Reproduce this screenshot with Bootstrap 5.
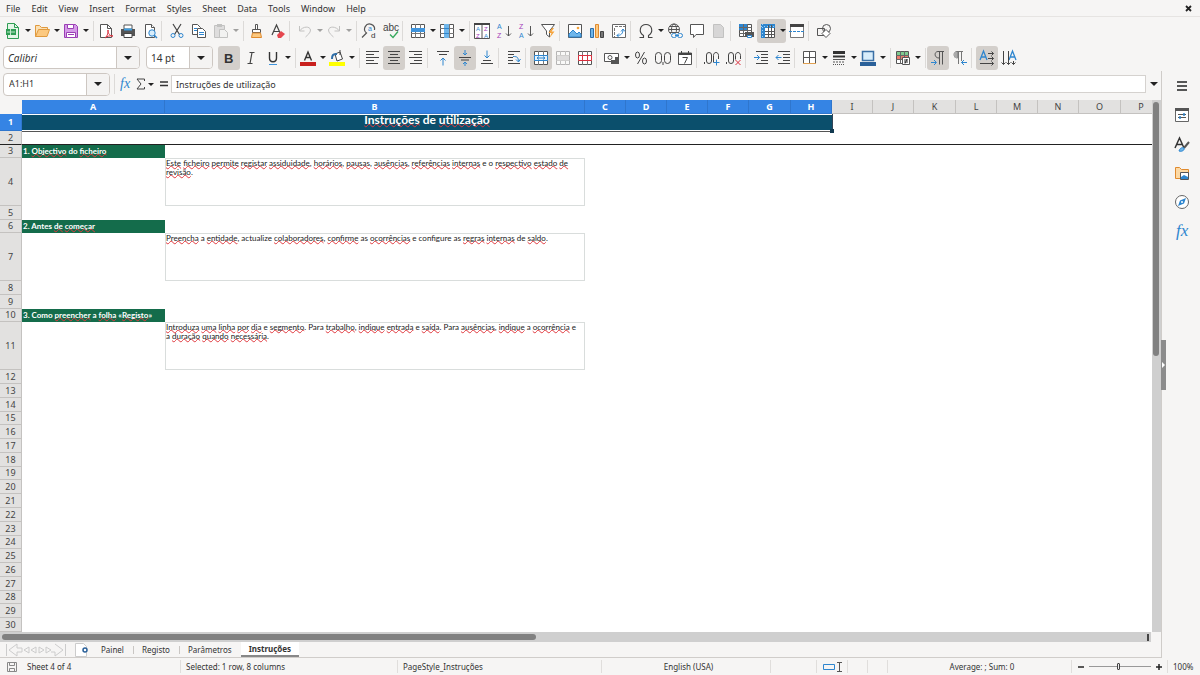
<!DOCTYPE html>
<html lang="en">
<head>
<meta charset="utf-8">
<meta name="viewport" content="width=device-width, initial-scale=1">
<title>Instruções – Calc</title>
<link href="https://cdn.jsdelivr.net/npm/bootstrap@5.3.0/dist/css/bootstrap.min.css" rel="stylesheet">
<style>
:root{--chrome:#f6f5f4;--line:#dcdad8;--ink:#333;--blue:#3584e4}
body{font:9px/12px "Noto Sans","Open Sans",sans-serif;color:var(--ink);background:var(--chrome)}
button,input{font:inherit;color:inherit;padding:0;border:0;background:none}
svg{display:block;flex:none;overflow:visible}
svg text{font-family:"Liberation Sans",sans-serif}
svg text.fx{font-family:"Liberation Serif",serif;font-style:italic}
.ic{width:16px;height:16px}
.menus{height:17px;border-bottom:1px solid #e6e4e2;padding:1px 8px 0 6px;gap:11px}
.menus a{color:var(--ink);text-decoration:none}
.tools{height:27px;padding-left:2px}
.tools.fmt{padding-left:3px}
.tb{width:22px;height:24px;border-radius:3px;display:flex;align-items:center;justify-content:center;flex:none}
.tb.dd{width:29px;justify-content:flex-start;padding-left:3px}
.tb.dd::after,.caret::after{content:"";border:3px solid transparent;border-top:3px solid #222;border-bottom:0;margin-left:4px}
.caret::after{border-width:4px 4px 0;margin:0}
.tb.on{background:#d3cfcb}
.tb:disabled{opacity:.4}
.bar{width:5px;height:20px;border-left:1px solid var(--line);flex:none}
.dd + .bar{width:6px;border-left:0;background:linear-gradient(var(--line),var(--line)) 4px 0/1px 100% no-repeat}
.combo{height:23px;border:1px solid #cdc7c2;border-radius:4px;background:#fff;overflow:hidden;flex:none}
.combo input{min-width:0;flex:1;padding-left:5px}
.combo button{width:23px;border-left:1px solid #cdc7c2;background:#f4f3f2}
.combo.face{width:137px}.combo.size{width:67px;margin:0 5px 0 6px}.combo.cellref{width:107px}
.combo.face input,.combo.size input{font-size:10px;padding-left:4px}
.fbar{height:29px;padding:0 0 3px 3px}
.fbar .formula{height:18px;border:1px solid #d5d2cf;background:#fff;padding-left:4px}
.fbar button.tb{width:14px}.fbar button.tb.dd{width:24px;padding:0 0 0 2px}
.fbar .tb.dd::after{margin-left:1px}
.sheetbox{background:#fff;min-height:0}
.grid{table-layout:fixed;width:1162px;border-collapse:separate;border-spacing:0;line-height:12px}
.grid th,.grid td{padding:0;white-space:nowrap}
.grid th{font-weight:400;text-align:center;background:#e2e1e0;border-right:1px solid #c4c2c0;border-bottom:1px solid #c4c2c0;color:#444;overflow:hidden}
.grid tr{height:14px}.grid tr.s{height:13px}.grid tr.tall{height:48px}.grid tr.title{height:17px}
.grid thead th.sel,.grid tbody th.sel{background:var(--blue);border-color:#2f76cd;color:#fff;font-weight:700}
.grid thead th:first-child{background:var(--chrome);border:0}
.grid td{font-family:Lato,sans-serif;vertical-align:top;color:#222}
.grid td.head{background:#0b4f6c;color:#fff;font-weight:700;font-size:12px;line-height:12px;text-align:center;vertical-align:top;border-bottom:1px solid #fff;box-shadow:0 1px #555,1px 0 #345,inset 0 1px #fff;position:relative}
.grid td.head::after{content:"";position:absolute;right:-2px;bottom:-3px;width:4px;height:4px;background:#123a50}
.grid td.sec{background:#146c4b;color:#fff;font-weight:700;font-size:8px;vertical-align:middle;line-height:11px;padding-left:1px}
.grid td.note{border:1px solid #d9dddc;line-height:9px;font-size:8px}
.grid tr.freeze>*{border-bottom:1px solid #222}
.grid u{text-decoration:underline wavy #e0393e 1px;text-underline-offset:-1px;text-decoration-skip-ink:none}
.vs{width:9px;background:#cfcfcf;padding:2px 2px 0 1px}.vs div{height:48%;border-radius:3px;background:#808080}
.hs{height:10px;background:#cfcfcf;padding:0 2px;margin-right:10px}.hs div{height:6px;border-radius:3px;background:#808080}
.hs i{width:2px;height:7px;background:#444}
.side{width:39px;border-left:1px solid #cfccc9;position:relative}
.side button{height:29px;padding-left:1px}
.grip{position:absolute;left:-1px;top:calc(50% - 25px);width:5px;height:50px;background:#8c8c8c}
.grip::after{content:"";border:3px solid transparent;border-left:3px solid #fff;border-right:0;margin-left:1px}
.tabs{height:16px;border-bottom:1px solid #d0cdca;padding-left:5px;font-size:8px}
.tabs .tabbtn{height:100%;padding:0 9px 0 8px;line-height:15px}
.tabs .tabbtn + .tabbtn{background:linear-gradient(#c9c6c3,#c9c6c3) 0 4px/1px 8px no-repeat;padding-left:9px}
.tabs .tabbtn.now{background:#fff;font-weight:700;border-bottom:2px solid #888;line-height:13px;padding:0 8px}
.stat{height:17px;font-size:8px}
.stat>div{border-left:1px solid #e0dedc;height:13px;padding-left:5px;flex-basis:0;min-width:0;white-space:nowrap;display:flex;align-items:center}
.stat>div.plain{border-color:transparent}
.stat input[type=range]{-webkit-appearance:none;appearance:none;height:12px;min-width:0;flex:1;background:linear-gradient(#999,#999) 0 50%/100% 1px no-repeat}
.stat input[type=range]::-webkit-slider-thumb{-webkit-appearance:none;width:3px;height:7px;border:1px solid #444;background:#eee;border-radius:1px}
</style>
</head>
<body class="vh-100 d-flex flex-column overflow-hidden">
<svg width="0" height="0" class="position-absolute" fill="none" stroke="#555">
<defs>
<g id="page" fill="#fff" stroke="#555"><path d="M3.500 1.500h6l3 3v10h-9z"/><path d="M9.500 1.500v3h3"/></g>
<g id="grd" fill="none"><path fill="#fff" stroke="#555" d="M1.500 1.500h13v13h-13z"/><path stroke="#777" d="M1 5.500h14M1 10.500h14M5.500 1v14M10.500 1v14"/></g>
<g id="arr" fill="none" stroke="#555"><path d="M12.500 3v10M10 10.500l2.500 2.500 2.500-2.500"/></g>
</defs>
</svg>

<nav class="menus d-flex align-items-center" aria-label="Menu">
<a href="#">File</a><a href="#">Edit</a><a href="#">View</a><a href="#">Insert</a><a href="#">Format</a><a href="#">Styles</a><a href="#">Sheet</a><a href="#">Data</a><a href="#">Tools</a><a href="#">Window</a><a href="#">Help</a>
<button class="ms-auto" aria-label="Close"><svg width="7" height="7" viewBox="0 0 7 7"><path d="M1 1l5 5M6 1L1 6" stroke="#222" stroke-width="1.800"/></svg></button>
</nav>

<div class="tools d-flex align-items-center" role="toolbar" aria-label="Standard">
<button class="tb dd" aria-label="New"><svg class="ic" viewBox="0 0 16 16" fill="none"><path d="M2.500 .5h7l4 4v11h-11z" fill="#e4f6e8" stroke="#2f9e54"/><path d="M9.500 .5v4h4" stroke="#2f9e54"/><path d="M1 6h10v6H1z" fill="#2f9e54"/><path d="M2 9h8M5.500 6v6" stroke="#bfe8cb"/></svg></button>
<button class="tb dd" aria-label="Open"><svg class="ic" viewBox="0 0 16 16"><path d="M1.500 13.500v-11h4l2 2h6v3" fill="#fbe0b3" stroke="#e09a3e"/><path d="M1.500 13.500l3-7h11l-2.500 7z" fill="#fcc980" stroke="#e09a3e"/></svg></button>
<button class="tb dd" aria-label="Save"><svg class="ic" viewBox="0 0 16 16"><path d="M1.500 1.500h11l2 2v11h-13z" fill="#d59be8" stroke="#9a3fb5"/><path d="M4.500 1.500h6v4h-6z" fill="#fff" stroke="#9a3fb5"/><path d="M3.500 9.500h9v5h-9z" fill="#fff" stroke="#9a3fb5"/><path d="M5 11.500h6" stroke="#9a3fb5"/></svg></button>
<span class="bar"></span>
<button class="tb" aria-label="Export as PDF"><svg class="ic" viewBox="0 0 16 16" fill="none"><path d="M2.500 1.500h7l4 4v9h-11z" fill="#fff" stroke="#555"/><path d="M9.500 1.500v4h4" stroke="#555"/><path d="M7 15c3-3 3-5 3-8 0 4 2 6 5 6-3-.5-6 0-8 2z" fill="#fff" stroke="#d9303e"/></svg></button>
<button class="tb" aria-label="Print"><svg class="ic" viewBox="0 0 16 16"><path d="M4 2h8v4H4z" fill="#fff" stroke="#555"/><path d="M1 6h14v7H1z" fill="#555"/><path d="M4 5.500h8v2H4z" fill="#3f9fe0"/><path d="M4 10.500h8v4H4z" fill="#fff" stroke="#444"/></svg></button>
<button class="tb" aria-label="Print Preview"><svg class="ic" viewBox="0 0 16 16"><use href="#page"/><circle cx="10" cy="10" r="3.200" fill="#d8edfb" stroke="#2e86cf"/><path d="M12.300 12.300l2.700 2.700" stroke="#2e86cf" stroke-width="1.500"/></svg></button>
<span class="bar"></span>
<button class="tb" aria-label="Cut"><svg class="ic" viewBox="0 0 16 16" fill="none"><path d="M4 1l6.500 10.500M12 1L5.500 11.500" stroke="#444" stroke-width="1.200"/><circle cx="4" cy="12.500" r="2" stroke="#2e86cf"/><circle cx="12" cy="12.500" r="2" stroke="#2e86cf"/></svg></button>
<button class="tb" aria-label="Copy"><svg class="ic" viewBox="0 0 16 16"><path d="M1.500 1.500h5l3 3v7h-8z" fill="#fff" stroke="#555"/><path d="M3 5.500h3M3 7.500h3" stroke="#2e86cf"/><path d="M6.500 5.500h5l3 3v6h-8z" fill="#fff" stroke="#555"/><path d="M8 9.500h5M8 11.500h5" stroke="#2e86cf"/></svg></button>
<button class="tb dd" disabled aria-label="Paste"><svg class="ic" viewBox="0 0 16 16"><path d="M1.500 2.500h10v12h-10z" fill="#bbb" stroke="#777"/><path d="M4 1h5v3H4z" fill="#777"/><path d="M6.500 6.500h5l3 3v5h-8z" fill="#eee" stroke="#777"/></svg></button>
<span class="bar"></span>
<button class="tb" aria-label="Clone Formatting"><svg class="ic" viewBox="0 0 16 16"><path d="M7.500 1.500h2v5h-2z" fill="#fff" stroke="#555"/><path d="M4.500 6.500h8v3h-8z" fill="#fff" stroke="#555"/><path d="M4.500 10h8l1 4.500h-10z" fill="#fcc980" stroke="#e08a2e"/></svg></button>
<button class="tb" aria-label="Clear Formatting"><svg class="ic" viewBox="0 0 16 16"><path d="M2 12L6.500 2 11 12M3.500 8.500h6" fill="none" stroke="#444" stroke-width="1.200"/><path d="M7 12l4-4 4 3-4 4H8z" fill="#e5474f"/></svg></button>
<span class="bar"></span>
<button class="tb dd" disabled aria-label="Undo"><svg class="ic" viewBox="0 0 16 16" fill="none"><path d="M2.500 3v5h5M2.500 8C6 3 13 3 13.500 7c0 3-3 5-5 7" stroke="#777"/></svg></button>
<button class="tb dd" disabled aria-label="Redo"><svg class="ic" viewBox="0 0 16 16" fill="none"><path d="M13.500 3v5h-5M13.500 8C10 3 3 3 2.500 7c0 3 3 5 5 7" stroke="#777"/></svg></button>
<span class="bar"></span>
<button class="tb" aria-label="Find and Replace"><svg class="ic" viewBox="0 0 16 16" fill="none"><path d="M13.500 7A5 5 0 1 0 5.500 10L1 14.500" stroke="#555" stroke-width="1.200"/><text x="7" y="8" font-size="7" fill="#2e86cf">a</text><text x="10" y="15" font-size="8" fill="#333">d</text></svg></button>
<button class="tb" aria-label="Spelling"><svg class="ic" viewBox="0 0 16 16" fill="none"><text x="0" y="8" font-size="10" fill="#444">abc</text><path d="M7 11.500l3 3 5-6" stroke="#35a85c" stroke-width="1.300"/></svg></button>
<span class="bar"></span>
<button class="tb dd" aria-label="Row"><svg class="ic" viewBox="0 0 16 16"><use href="#grd"/><path d="M1 5h14v4H1z" fill="#3f94dc"/></svg></button>
<button class="tb dd" aria-label="Column"><svg class="ic" viewBox="0 0 16 16"><use href="#grd"/><path d="M5 1h5v14H5z" fill="#6fb6ea"/><path d="M5 5.500h5M5 10.500h5" stroke="#2e86cf"/></svg></button>
<span class="bar"></span>
<button class="tb" aria-label="Sort"><svg class="ic" viewBox="0 0 16 16"><path d="M.5 .5h15v15H.5zM8 .5v15" fill="#fff" stroke="#555"/><path d="M0 1h16" stroke="#444" stroke-width="2"/><g font-size="6"><text x="2" y="8" fill="#2e86cf">A</text><text x="2" y="15" fill="#a43bb8">Z</text><text x="10" y="8" fill="#a43bb8">Z</text><text x="10" y="15" fill="#2e86cf">A</text></g></svg></button>
<button class="tb" aria-label="Sort Ascending"><svg class="ic" viewBox="0 0 16 16"><g font-size="7"><text x="1" y="6" fill="#2e86cf">A</text><text x="1" y="15" fill="#a43bb8">Z</text></g><use href="#arr"/></svg></button>
<button class="tb" aria-label="Sort Descending"><svg class="ic" viewBox="0 0 16 16"><g font-size="7"><text x="1" y="6" fill="#a43bb8">Z</text><text x="1" y="15" fill="#2e86cf">A</text></g><use href="#arr"/></svg></button>
<button class="tb" aria-label="AutoFilter"><svg class="ic" viewBox="0 0 16 16"><path d="M1.500 1.500h13L9.500 8v6l-3-2.500V8z" fill="#fff" stroke="#555"/><path d="M12 5L8.500 10h3L9.500 15l5-6.500h-3L14 5z" fill="#f5a33b"/></svg></button>
<span class="bar"></span>
<button class="tb" aria-label="Image"><svg class="ic" viewBox="0 0 16 16"><path d="M1.500 1.500h13v13h-13z" fill="#fff" stroke="#555"/><path d="M2 14v-3l4-4 4 4 2-2 2 2v3z" fill="#6fb6ea" stroke="#2e86cf"/><circle cx="11" cy="5" r="1.300" fill="#f5a33b"/></svg></button>
<button class="tb" aria-label="Chart"><svg class="ic" viewBox="0 0 16 16"><path d="M1.500 5.500h3v9h-3z" fill="#6fb6ea" stroke="#2e6ea8"/><path d="M6.500 1.500h3v13h-3z" fill="#fcc980" stroke="#e08a2e"/><path d="M11.500 8.500h3v6h-3z" fill="#777" stroke="#444"/></svg></button>
<button class="tb" aria-label="Pivot Table"><svg class="ic" viewBox="0 0 16 16" fill="none"><path d="M1.500 1.500h13v13h-13z" fill="#fff" stroke="#666"/><path d="M4 3.500h10M3.500 5v9" stroke="#777" stroke-dasharray="3 1"/><path d="M6 12.500c4 0 6-2 6-6M10 8.500l2-2.500 2 2.500M8 10.500l-2 2 2 2" stroke="#2e86cf"/></svg></button>
<span class="bar"></span>
<button class="tb dd" aria-label="Special Character"><svg class="ic" viewBox="0 0 16 16" fill="none"><path d="M1.500 14.500h4v-2C0 9 2 1.500 8 1.500S16 9 10.500 12.500v2h4" stroke="#444" stroke-width="1.100"/></svg></button>
<button class="tb" aria-label="Hyperlink"><svg class="ic" viewBox="0 0 16 16" fill="none"><circle cx="7" cy="6.500" r="5.500" stroke="#555"/><ellipse cx="7" cy="6.500" rx="2.500" ry="5.500" stroke="#555"/><path d="M1.500 6.500h11M2.500 3.500h9M2.500 9.500h9" stroke="#555"/><path d="M4 10h12v6H4z" fill="#f6f5f4"/><rect x="4.500" y="10.500" width="5" height="4" rx="2" stroke="#2e86cf"/><rect x="10.500" y="10.500" width="5" height="4" rx="2" stroke="#2e86cf"/><path d="M8 12.500h4" stroke="#2e86cf"/></svg></button>
<button class="tb" aria-label="Comment"><svg class="ic" viewBox="0 0 16 16"><path d="M1.500 1.500h13v10H7l-2.500 3v-3h-3z" fill="#fff" stroke="#555"/></svg></button>
<button class="tb" disabled aria-label="Headers and Footers"><svg class="ic" viewBox="0 0 16 16"><path d="M2.500 1.500h7l3 3v10h-10z" fill="#aaa" stroke="#777"/></svg></button>
<span class="bar"></span>
<button class="tb" aria-label="Define Print Area"><svg class="ic" viewBox="0 0 16 16"><path fill="#fff" stroke="#555" d="M1.500 1.500h12v12h-12z"/><path d="M1 1h9v6H1z" fill="#2e86cf"/><path stroke="#666" d="M1 4.500h13M1 7.500h13M1 10.500h13M5.500 1v13M9.500 1v13"/><path d="M7 9h9v5H7z" fill="#555"/><path d="M9.500 12.500h4v2h-4z" fill="#fff" stroke="#2e86cf"/></svg></button>
<button class="tb dd on" aria-label="Freeze Rows and Columns"><svg class="ic" viewBox="0 0 16 16"><path fill="#fff" stroke="#555" d="M2.500 2.500h12v12h-12z"/><path d="M1 1h14v4H5v10H1z" fill="#2e86cf"/><path stroke="#555" d="M5 8.500h10M5 11.500h10M8.500 2v13M11.500 2v13"/><path stroke="#9cd0f5" d="M2.500 1v14M1 3.500h14" stroke-dasharray="1 2"/></svg></button>
<button class="tb" aria-label="Split Window"><svg class="ic" viewBox="0 0 16 16" fill="none"><path d="M1.500 1.500h13v13h-13z" fill="#fff" stroke="#777"/><path d="M1 2.500h14" stroke="#444" stroke-width="3"/><path d="M0 8.500h16" stroke="#2e86cf" stroke-dasharray="3 1"/></svg></button>
<span class="bar"></span>
<button class="tb" aria-label="Show Draw Functions"><svg class="ic" viewBox="0 0 16 16" fill="none" stroke="#555"><path d="M1.500 5.500h7v7h-7z"/><circle cx="10.500" cy="5.500" r="4"/><path d="M10 6.500l4 4-4 4-4-4z" fill="#fff"/></svg></button>
</div>

<div class="tools fmt d-flex align-items-center" role="toolbar" aria-label="Formatting">
<div class="combo face d-flex"><input class="fst-italic" aria-label="Font name" value="Calibri"><button class="caret d-flex align-items-center justify-content-center" aria-label="Font list"></button></div>
<div class="combo size d-flex"><input aria-label="Font size" value="14 pt"><button class="caret d-flex align-items-center justify-content-center" aria-label="Size list"></button></div>
<button class="tb on" aria-label="Bold"><svg class="ic" viewBox="0 0 16 16"><text x="3" y="13" font-size="13" font-weight="700" fill="#333">B</text></svg></button>
<button class="tb" aria-label="Italic"><svg class="ic" viewBox="0 0 16 16" fill="none"><path d="M6.500 2.500h5M4.500 13.500h5M9 2.500L7 13.500" stroke="#444" stroke-width="1.200"/></svg></button>
<button class="tb dd" aria-label="Underline"><svg class="ic" viewBox="0 0 16 16" fill="none"><path d="M4.500 2v6c0 5 7 5 7 0V2" stroke="#333" stroke-width="1.400"/><path d="M4 14.500h8" stroke="#3f94dc"/></svg></button>
<span class="bar"></span>
<button class="tb dd" aria-label="Font Color"><svg class="ic" viewBox="0 0 16 16" fill="none"><path d="M4.500 10.500L8 2l3.500 8.500M5.500 7.500h5" stroke="#333" stroke-width="1.400"/><path d="M0 12h16v4H0z" fill="#c9211e"/></svg></button>
<button class="tb dd" aria-label="Background Color"><svg class="ic" viewBox="0 0 16 16" fill="none"><path d="M6 4l5-2 2.500 7-5.500 2z" fill="#fff" stroke="#444"/><path d="M11 5V0" stroke="#444"/><path d="M3 9c0-4 1-5 5-5" stroke="#2e6ea8" stroke-width="2"/><path d="M0 12h16v4H0z" fill="#ffff00"/></svg></button>
<span class="bar"></span>
<button class="tb" aria-label="Align Left"><svg class="ic" viewBox="0 0 16 16" stroke="#444"><path d="M2 1.500h13M2 4.500h8M2 7.500h13M2 10.500h8M2 13.500h12"/></svg></button>
<button class="tb on" aria-label="Center Horizontally"><svg class="ic" viewBox="0 0 16 16" stroke="#444"><path d="M2 1.500h12M4 4.500h8M2 7.500h12M4 10.500h8M2 13.500h12"/></svg></button>
<button class="tb" aria-label="Align Right"><svg class="ic" viewBox="0 0 16 16" stroke="#444"><path d="M1 1.500h13M6 4.500h8M1 7.500h13M6 10.500h8M2 13.500h12"/></svg></button>
<span class="bar"></span>
<button class="tb" aria-label="Align Top"><svg class="ic" viewBox="0 0 16 16" fill="none"><path d="M2 1.500h12M4 4.500h8" stroke="#444"/><path d="M8 15.500V8M5.500 10.500L8 8l2.500 2.500" stroke="#2e86cf"/></svg></button>
<button class="tb on" aria-label="Center Vertically"><svg class="ic" viewBox="0 0 16 16" fill="none"><path d="M2 7.500h12M4 10h8" stroke="#444"/><path d="M8 0v5M6 3l2 2 2-2M8 16v-4M6 14l2-2 2 2" stroke="#2e86cf"/></svg></button>
<button class="tb" aria-label="Align Bottom"><svg class="ic" viewBox="0 0 16 16" fill="none"><path d="M2 13.500h12M4 10.500h8" stroke="#444"/><path d="M8 .5V8M5.500 5.500L8 8l2.500-2.500" stroke="#2e86cf"/></svg></button>
<span class="bar"></span>
<button class="tb" aria-label="Wrap Text"><svg class="ic" viewBox="0 0 16 16" fill="none"><path d="M2 1.500h12M2 4.500h6M2 7.500h5M2 10.500h5M2 13.500h12" stroke="#444"/><path d="M7 6.500c5 0 5 1 5.500 5M10 9.500l2.500 2.500 2-3" stroke="#2e86cf"/></svg></button>
<span class="bar"></span>
<button class="tb on" aria-label="Merge and Center Cells"><svg class="ic" viewBox="0 0 16 16"><use href="#grd"/><path d="M1.500 5.500h13v5h-13z" fill="#e5f2fc" stroke="#2e86cf"/><path d="M4 8h8M6 6.500L4 8l2 1.500M10 6.500L12 8l-2 1.500" fill="none" stroke="#2e86cf"/></svg></button>
<button class="tb" disabled aria-label="Merge Cells"><svg class="ic" viewBox="0 0 16 16"><use href="#grd"/><path d="M2 5.500h12v5H2z" fill="#bbb"/></svg></button>
<button class="tb" aria-label="Unmerge Cells"><svg class="ic" viewBox="0 0 16 16"><use href="#grd"/><path d="M1.500 5.500h13v5h-13zM5.500 5v6M10.500 5v6" fill="#fff" stroke="#d9303e"/></svg></button>
<span class="bar"></span>
<button class="tb dd" aria-label="Format as Currency"><svg class="ic" viewBox="0 0 16 16"><path d="M.5 3.500h14v8H.5z" fill="#fff" stroke="#555"/><circle cx="6" cy="7.500" r="2" fill="none" stroke="#555"/><path d="M7 10h4v4H7zM11 7h4v7h-4z" fill="#555"/></svg></button>
<button class="tb" aria-label="Format as Percent"><svg class="ic" viewBox="0 0 16 16" fill="none" stroke="#444"><ellipse cx="4.500" cy="5" rx="2" ry="3"/><ellipse cx="11.500" cy="11" rx="2" ry="3"/><path d="M11.500 2l-7 12"/></svg></button>
<button class="tb" aria-label="Format as Number"><svg class="ic" viewBox="0 0 16 16" fill="none" stroke="#444"><rect x=".5" y="2.500" width="6" height="11" rx="3"/><path d="M8 12v3"/><rect x="9.500" y="2.500" width="6" height="11" rx="3"/></svg></button>
<button class="tb" aria-label="Format as Date"><svg class="ic" viewBox="0 0 16 16" fill="none"><path d="M1.500 3h13v11.500h-13z" fill="#fff" stroke="#555"/><path d="M1 4h14" stroke="#444" stroke-width="2"/><path d="M4.500 1v3M11.500 1v3" stroke="#444"/><path d="M5.500 7.500h5l-3 6" stroke="#444"/></svg></button>
<span class="bar"></span>
<button class="tb" aria-label="Add Decimal Place"><svg class="ic" viewBox="0 0 16 16" fill="none" stroke="#444"><path d="M.5 12v2"/><rect x="2.500" y="2.500" width="5" height="11" rx="2.500"/><path d="M9.500 12.500v-7c0-4 5-4 5 0V9"/><path d="M9.500 12.500h6M12.500 9.500v6" stroke="#2e86cf"/></svg></button>
<button class="tb" aria-label="Delete Decimal Place"><svg class="ic" viewBox="0 0 16 16" fill="none" stroke="#444"><path d="M.5 12v2"/><rect x="2.500" y="2.500" width="5" height="11" rx="2.500"/><path d="M9.500 9.500v-4c0-4 5-4 5 0V9"/><path d="M9.500 10l5 5M14.500 10l-5 5" stroke="#d9303e"/></svg></button>
<span class="bar"></span>
<button class="tb" aria-label="Increase Indent"><svg class="ic" viewBox="0 0 16 16" fill="none"><path d="M3 1.500h12M8 4.500h7M8 7.500h7M8 10.500h7M3 13.500h12" stroke="#444"/><path d="M1 7.500h5.500M4 5l2.500 2.500L4 10" stroke="#2e86cf"/></svg></button>
<button class="tb" aria-label="Decrease Indent"><svg class="ic" viewBox="0 0 16 16" fill="none"><path d="M3 1.500h12M8 4.500h7M8 7.500h7M8 10.500h7M3 13.500h12" stroke="#444"/><path d="M1 7.500h5.500M3.500 5L1 7.500 3.500 10" stroke="#2e86cf"/></svg></button>
<span class="bar"></span>
<button class="tb dd" aria-label="Borders"><svg class="ic" viewBox="0 0 16 16"><path d="M1.500 1.500h12v12h-12zM7.500 1.500v12M1.500 7.500h12" fill="#fff" stroke="#555"/><path d="M1 13.500h13" stroke="#e0a050"/></svg></button>
<button class="tb dd" aria-label="Border Style"><svg class="ic" viewBox="0 0 16 16"><path d="M2 2.500h12" stroke="#333" stroke-width="3"/><path d="M2 6.500h12" stroke="#333" stroke-width="2"/><path d="M2 9.500h12" stroke="#555"/><path d="M2 12h12" stroke="#555" stroke-dasharray="2 1"/><path d="M2 14.500h12" stroke="#555" stroke-dasharray="1 1"/></svg></button>
<button class="tb dd" aria-label="Border Color"><svg class="ic" viewBox="0 0 16 16"><path d="M2.500 1.500h11v9h-11z" fill="#d8edfb" stroke="#3a6fa5" stroke-width="1.500"/><path d="M0 12h16v4H0z" fill="#2a6099"/></svg></button>
<span class="bar"></span>
<button class="tb dd" aria-label="Conditional"><svg class="ic" viewBox="0 0 16 16"><path d="M1.500 1.500h12v12h-12z" fill="#fff" stroke="#555"/><path d="M2 2h11v4H2z" fill="#7fc98f"/><path d="M2 6h11v4H2z" fill="#ec7d6d"/><path d="M1 5.500h13M1 9.500h13M5.500 1v13M9.500 1v13" stroke="#666"/><path d="M7.500 7.500h7v7h-7z" fill="#fff" stroke="#555"/><path d="M9 10h4M9 12h4M12 9l-2 4.500" stroke="#333"/></svg></button>
<span class="bar"></span>
<button class="tb on" aria-label="Left-To-Right"><svg class="ic" viewBox="0 0 16 16" fill="none"><path d="M14 1.500H8C4 1.500 4 8 9 8M9.500 1.500v13M12.500 1.500v13" stroke="#555"/><path d="M1 12.500h5M4 10l2.500 2.500L4 15" stroke="#2e86cf"/></svg></button>
<button class="tb" aria-label="Right-To-Left"><svg class="ic" viewBox="0 0 16 16" fill="none"><path d="M11 1.500H5C1 1.500 1 8 5.500 8V1.500M6.500 2v12M9.500 2v9" stroke="#777"/><path d="M4 2v6" stroke="#aaa" stroke-width="3"/><path d="M9.500 12.500H15M12 10l-2.500 2.500L12 15" stroke="#2e86cf"/></svg></button>
<span class="bar"></span>
<button class="tb on" aria-label="Text direction from left to right"><svg class="ic" viewBox="0 0 16 16" fill="none"><path d="M1 10L4.500 1 8 10M2.500 7h4.500" stroke="#2e86cf" stroke-width="1.300"/><path d="M9 3.500h5.500M9 8.500h5.500M1 13.500h13.500M12.500 1.500l2 2-2 2M12.500 6.500l2 2-2 2M12.500 11.500l2 2-2 2" stroke="#444"/></svg></button>
<button class="tb" aria-label="Text direction from top to bottom"><svg class="ic" viewBox="0 0 16 16" fill="none"><path d="M8 10l3.500-9L15 10M9 7h5" stroke="#2e86cf" stroke-width="1.300"/><path d="M2.500 1v13.500M7.500 1v13.500M12.500 11v3.500M.5 12.500l2 2 2-2M5.500 12.500l2 2 2-2M10.500 12.500l2 2 2-2" stroke="#444"/></svg></button>
</div>

<div class="d-flex flex-fill" style="min-height:0">
<main class="d-flex flex-column flex-fill" style="min-width:0">
<div class="fbar d-flex align-items-center">
<div class="combo cellref d-flex"><input aria-label="Name Box" value="A1:H1"><button class="caret d-flex align-items-center justify-content-center" aria-label="Names"></button></div>
<span class="bar ms-1"></span>
<button class="tb" aria-label="Function Wizard"><svg width="12" height="14" viewBox="0 0 12 14"><text class="fx" x="0" y="11" font-size="14" fill="#2e86cf">fx</text></svg></button>
<button class="tb dd" aria-label="Select Function"><svg width="12" height="14" viewBox="0 0 12 14"><path d="M9.500 4V2H2l4 5-4 5h7.500v-2" fill="none" stroke="#444"/></svg></button>
<button class="tb" aria-label="Formula"><svg width="8" height="8" viewBox="0 0 8 8"><path d="M0 2h8M0 5.500h8" stroke="#333" stroke-width="1.500"/></svg></button>
<input class="formula flex-fill" aria-label="Input line" value="Instruções de utilização">
<button class="caret d-flex justify-content-center" style="width:15px" aria-label="Expand Formula Bar"></button>
</div>
<div class="sheetbox d-flex flex-fill">
<div class="flex-fill overflow-hidden" style="min-width:0">
<table class="grid">
<colgroup><col style="width:22px"><col style="width:143px"><col style="width:420px"><col style="width:41px"><col style="width:41px"><col style="width:41px"><col style="width:41px"><col style="width:42px"><col style="width:41px"><col style="width:41px"><col style="width:41px"><col style="width:42px"><col style="width:41px"><col style="width:41px"><col style="width:41px"><col style="width:42px"></colgroup>
<thead><tr><th></th><th class="sel">A</th><th class="sel">B</th><th class="sel">C</th><th class="sel">D</th><th class="sel">E</th><th class="sel">F</th><th class="sel">G</th><th class="sel">H</th><th>I</th><th>J</th><th>K</th><th>L</th><th>M</th><th>N</th><th>O</th><th>P</th></tr></thead>
<tbody>
<tr class="title"><th class="sel">1</th><td class="head" colspan="8"><u>Instruções</u> de <u>utilização</u></td><td colspan="8"></td></tr>
<tr class="freeze"><th>2</th><td colspan="16"></td></tr>
<tr class="s"><th>3</th><td class="sec">1. <u>Objectivo</u> do <u>ficheiro</u></td><td colspan="15"></td></tr>
<tr class="tall"><th>4</th><td></td><td class="note"><u>Este</u> <u>ficheiro</u> <u>permite</u> <u>registar</u> <u>assiduidade</u>, <u>horários</u>, <u>pausas</u>, <u>ausências</u>, <u>referências</u> <u>internas</u> e o <u>respectivo</u> <u>estado</u> <u>de</u><br><u>revisão</u>.</td><td colspan="14"></td></tr>
<tr><th>5</th><td colspan="16"></td></tr>
<tr class="s"><th>6</th><td class="sec">2. Antes <u>de</u> <u>começar</u></td><td colspan="15"></td></tr>
<tr class="tall"><th>7</th><td></td><td class="note"><u>Preencha</u> a <u>entidade</u>, actualize <u>colaboradores</u>, <u>confirme</u> as <u>ocorrências</u> e configure as <u>regras</u> <u>internas</u> de <u>saldo</u>.</td><td colspan="14"></td></tr>
<tr><th>8</th><td colspan="16"></td></tr>
<tr><th>9</th><td colspan="16"></td></tr>
<tr class="s"><th>10</th><td class="sec">3. Como <u>preencher</u> a <u>folha</u> «<u>Registo</u>»</td><td colspan="15"></td></tr>
<tr class="tall"><th>11</th><td></td><td class="note"><u>Introduza</u> <u>uma</u> <u>linha</u> <u>por</u> <u>dia</u> e <u>segmento</u>. Para <u>trabalho</u>, <u>indique</u> <u>entrada</u> e <u>saída</u>. Para <u>ausências</u>, <u>indique</u> a <u>ocorrência</u> e<br>a <u>duração</u> <u>quando</u> <u>necessária</u>.</td><td colspan="14"></td></tr>
<tr><th>12</th><td colspan="16"></td></tr>
<tr><th>13</th><td colspan="16"></td></tr>
<tr><th>14</th><td colspan="16"></td></tr>
<tr class="s"><th>15</th><td colspan="16"></td></tr>
<tr><th>16</th><td colspan="16"></td></tr>
<tr><th>17</th><td colspan="16"></td></tr>
<tr><th>18</th><td colspan="16"></td></tr>
<tr class="s"><th>19</th><td colspan="16"></td></tr>
<tr><th>20</th><td colspan="16"></td></tr>
<tr><th>21</th><td colspan="16"></td></tr>
<tr><th>22</th><td colspan="16"></td></tr>
<tr><th>23</th><td colspan="16"></td></tr>
<tr class="s"><th>24</th><td colspan="16"></td></tr>
<tr><th>25</th><td colspan="16"></td></tr>
<tr><th>26</th><td colspan="16"></td></tr>
<tr><th>27</th><td colspan="16"></td></tr>
<tr class="s"><th>28</th><td colspan="16"></td></tr>
<tr><th>29</th><td colspan="16"></td></tr>
<tr><th>30</th><td colspan="16"></td></tr>
</tbody>
</table>
</div>
<div class="vs"><div></div></div>
</div>
<div class="hs d-flex align-items-center"><div style="width:46.5%"></div><i class="ms-auto"></i></div>
<div class="tabs d-flex align-items-center">
<svg width="62" height="14" viewBox="0 0 62 14" fill="none" stroke="#ccc"><path d="M1.500 1v12M12 1L4 7l8 6V9h5V5h-5zM24 4l-5 3 5 3zM31 4l-5 3 5 3zM34 4l5 3-5 3zM41 4l5 3-5 3zM50 1l8 6-8 6V9h-4M60.500 1v12"/></svg>
<button class="ms-2 me-1" aria-label="Add Sheet"><svg width="14" height="14" viewBox="0 0 14 14"><path d="M.5.500h8l3 3v10H.5z" fill="#fff" stroke="#ccc"/><circle cx="10" cy="7" r="2" fill="#fff" stroke="#2a6099" stroke-width="1.500"/></svg></button>
<button class="tabbtn">Painel</button><button class="tabbtn">Registo</button><button class="tabbtn">Parâmetros</button><button class="tabbtn now">Instruções</button>
</div>
</main>
<aside class="side d-flex flex-column align-items-center">
<button aria-label="Sidebar Settings"><svg class="ic" viewBox="0 0 16 16"><path d="M3 4h10M3 8h10M3 12h10" stroke="#222" stroke-width="1.500"/></svg></button>
<button aria-label="Properties"><svg class="ic" viewBox="0 0 16 16" fill="none"><path d="M1.500 1.500h13v13h-13z" fill="#fff" stroke="#666"/><path d="M1 2.500h14" stroke="#555" stroke-width="3"/><path d="M4 7.500h8M4 10.500h8" stroke="#555"/><path d="M10 6v3M6 9v3" stroke="#2e86cf" stroke-width="1.500"/></svg></button>
<button aria-label="Styles"><svg class="ic" viewBox="0 0 16 16" fill="none"><path d="M1 12L5.500 2 10 12M2.500 8.500h6" stroke="#333" stroke-width="1.500"/><path d="M15 6l-5 6" stroke="#555" stroke-width="2"/><path d="M5 15c1-3 3-4 5-3 1 2-2 4-5 3z" fill="#6fb6ea" stroke="#2e86cf"/></svg></button>
<button aria-label="Gallery"><svg class="ic" viewBox="0 0 16 16"><path d="M1.500 13.500v-11h4l2 2h7v9z" fill="#fcd9a5" stroke="#e08a2e"/><path d="M6.500 7.500h8v7h-8z" fill="#fff" stroke="#555"/><path d="M7 14v-2l3-2 4 2v2z" fill="#2e86cf"/></svg></button>
<button aria-label="Navigator"><svg class="ic" viewBox="0 0 16 16"><circle cx="8" cy="8" r="6.500" fill="#fff" stroke="#666"/><path d="M12 4l-2 5.500L4 12l2-5.500z" fill="#2e86cf"/><circle cx="8" cy="8" r="1" fill="#fff"/></svg></button>
<button aria-label="Functions"><svg class="ic" viewBox="0 0 16 16"><text class="fx" x="2" y="13" font-size="17" fill="#2e86cf">fx</text></svg></button>
<div class="grip d-flex align-items-center"></div>
</aside>
</div>

<footer class="stat d-flex align-items-center">
<div class="plain" style="flex-grow:15"><svg width="12" height="12" viewBox="0 0 12 12" fill="none" stroke="#888"><path d="M1.500 1.500h9v9h-9zM3.500 1.500v3h5v-3M3.500 10.500v-3h5v3"/></svg></div>
<div class="plain" style="flex-grow:153">Sheet 4 of 4</div>
<div style="flex-grow:211">Selected: 1 row, 8 columns</div>
<div style="flex-grow:198">PageStyle_Instruções</div>
<div style="flex-grow:163" class="justify-content-center">English (USA)</div>
<div style="flex-grow:40"></div>
<div style="flex-grow:25"><svg width="20" height="12" viewBox="0 0 20 12" fill="none"><path d="M1.500 3.500h11v5h-11z" stroke="#2e86cf"/><path d="M15 1.500h5M15 10.500h5M17.500 1.500v9" stroke="#555"/></svg></div>
<div style="flex-grow:14"></div><div style="flex-grow:14"></div>
<div style="flex-grow:178" class="justify-content-center">Average: ; Sum: 0</div>
<div style="flex-grow:86" class="pe-1"><button aria-label="Zoom out"><svg width="8" height="8" viewBox="0 0 8 8"><path d="M1 4h6" stroke="#222" stroke-width="1.500"/></svg></button><input class="mx-1" type="range" aria-label="Zoom" min="0" max="100" value="48"><button aria-label="Zoom in"><svg width="8" height="8" viewBox="0 0 8 8"><path d="M1 4h6M4 1v6" stroke="#222" stroke-width="1.500"/></svg></button></div>
<div style="flex-grow:27">100%</div>
</footer>
<script src="https://cdn.jsdelivr.net/npm/bootstrap@5.3.0/dist/js/bootstrap.bundle.min.js"></script>
</body>
</html>
